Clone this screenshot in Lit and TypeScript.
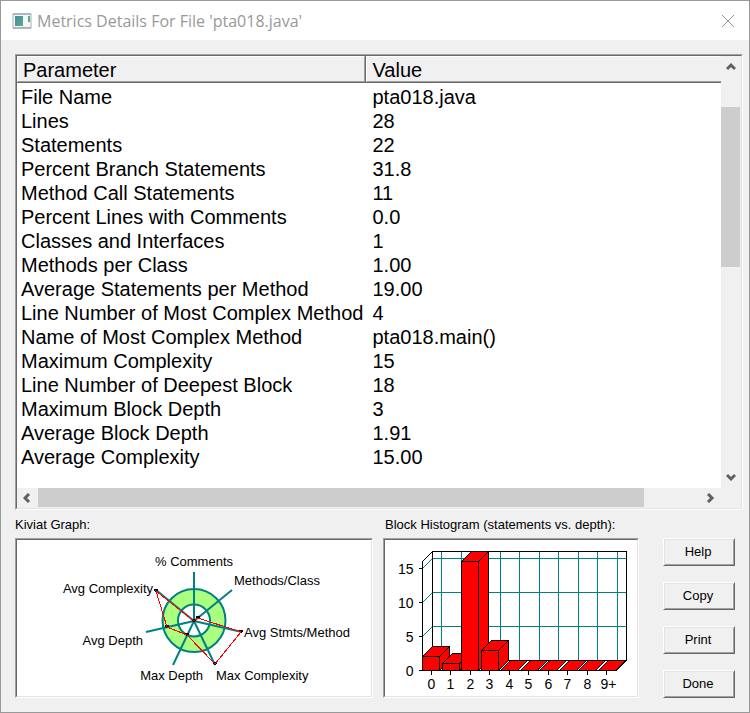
import { LitElement, html, svg, css } from "lit";
import { customElement, property } from "lit/decorators.js";
import { styleMap } from "lit/directives/style-map.js";

const METRICS: [string, string][] = [
  ["File Name", "pta018.java"],
  ["Lines", "28"],
  ["Statements", "22"],
  ["Percent Branch Statements", "31.8"],
  ["Method Call Statements", "11"],
  ["Percent Lines with Comments", "0.0"],
  ["Classes and Interfaces", "1"],
  ["Methods per Class", "1.00"],
  ["Average Statements per Method", "19.00"],
  ["Line Number of Most Complex Method", "4"],
  ["Name of Most Complex Method", "pta018.main()"],
  ["Maximum Complexity", "15"],
  ["Line Number of Deepest Block", "18"],
  ["Maximum Block Depth", "3"],
  ["Average Block Depth", "1.91"],
  ["Average Complexity", "15.00"],
];

interface Axis {
  label: string;
  reach: number;
  x: number;
  y: number;
  anchor: "start" | "middle" | "end";
}

// Axes run clockwise from twelve o'clock; reach is the distance from the hub.
const AXES: Axis[] = [
  { label: "% Comments", reach: 0, x: 177, y: 26, anchor: "middle" },
  { label: "Methods/Class", reach: 5, x: 217, y: 45, anchor: "start" },
  { label: "Avg Stmts/Method", reach: 48, x: 227, y: 97, anchor: "start" },
  { label: "Max Complexity", reach: 48, x: 199, y: 140, anchor: "start" },
  { label: "Max Depth", reach: 16, x: 186, y: 140, anchor: "end" },
  { label: "Avg Depth", reach: 28, x: 126, y: 105, anchor: "end" },
  { label: "Avg Complexity", reach: 48, x: 136, y: 53, anchor: "end" },
];

@customElement("kiviat-graph")
export class KiviatGraph extends LitElement {
  static styles = css`
    :host { display: block; }
    svg { display: block; width: 100%; height: 156px; }
    text { font: 13px "Liberation Sans", Arial, sans-serif; fill: #000; }
    .band { fill: #aaff80; stroke: #008080; stroke-width: 2; }
    .core { fill: #fff; stroke: #008080; stroke-width: 2; }
    .spoke { stroke: #008080; stroke-width: 2; }
    .values { fill: none; stroke: #f00; stroke-width: 1; shape-rendering: crispEdges; }
  `;

  private at(i: number, r: number): [number, number] {
    const a = (i * 2 * Math.PI) / AXES.length;
    return [Math.round(177 + r * Math.sin(a)), Math.round(81 - r * Math.cos(a))];
  }

  render() {
    const points = AXES.map((axis, i) => this.at(i, axis.reach));
    return html`<svg viewBox="0 0 354 156" role="img" aria-label="Kiviat graph">
      <circle class="band" cx="177" cy="80.5" r="31.5"></circle>
      <circle class="core" cx="177" cy="80.5" r="16"></circle>
      ${AXES.map((_, i) => {
        const [x, y] = this.at(i, 49);
        return svg`<line class="spoke" x1="177" y1="81" x2=${x} y2=${y}></line>`;
      })}
      ${points.map(([x, y]) => svg`<path d="M${x - 2} ${y - 2}h4v2h-1v1h-2v-1h-1z"></path>`)}
      <polygon class="values" points=${points.map((p) => p.join(",")).join(" ")}></polygon>
      ${AXES.map((a) => svg`<text x=${a.x} y=${a.y} text-anchor=${a.anchor}>${a.label}</text>`)}
    </svg>`;
  }
}

const DEPTHS: [string, number][] = [
  ["0", 2], ["1", 1], ["2", 16], ["3", 3], ["4", 0],
  ["5", 0], ["6", 0], ["7", 0], ["8", 0], ["9+", 0],
];

@customElement("block-histogram")
export class BlockHistogram extends LitElement {
  static styles = css`
    :host { display: block; }
    svg { display: block; width: 100%; height: 156px; }
    text { font: 14px "Liberation Sans", Arial, sans-serif; fill: #000; }
    .grid { fill: none; stroke: #008080; shape-rendering: crispEdges; }
    .slope { fill: none; stroke: #008080; }
    .frame { fill: none; stroke: #000; shape-rendering: crispEdges; }
    .bar { fill: #f00; stroke: #000; shape-rendering: crispEdges; }
  `;

  render() {
    const left = 37, base = 130, depth = 10, pitch = 19.5, width = 17, unit = 6.8;
    const top = base - Math.round(16 * unit);
    const end = left + Math.round(pitch * 10) - 1;
    return html`<svg viewBox="0 0 252 156" role="img" aria-label="Block histogram">
      <g transform="translate(0.5 0.5)">
        ${DEPTHS.map((_, k) => {
          const x = Math.round(left + 19 + k * pitch);
          return svg`<path class="grid" d="M${x} ${top - depth}V${base - depth}"></path>`;
        })}
        ${[5, 10, 15].map((v) => {
          const y = base - v * unit;
          return svg`<path class="grid" d="M${left + depth} ${y - depth}H${end + depth}"></path>
            <path class="slope" d="M${left} ${y}l${depth} ${-depth}"></path>`;
        })}
        <path class="frame" d="M${left} ${base}V${top}l${depth} ${-depth}H${end + depth}V${base - depth}L${end} ${base}H${left - 4}M${left + depth} ${top - depth}V${base - depth}H${end + depth}"></path>
        ${DEPTHS.map(([, v], k) => {
          const x = Math.round(left + k * pitch);
          const h = Math.round(v * unit);
          const y = base - h;
          return svg`
            <path class="bar" d="M${x} ${y}l${depth} ${-depth}h${width}v${h}l${-depth} ${depth}h${-width}z"></path>
            <path class="frame" d="M${x} ${y}h${width}v${h}M${x + width} ${y}l${depth} ${-depth}"></path>`;
        })}
        ${[0, 5, 10, 15].map((v) => {
          const y = base - v * unit;
          return svg`<path class="frame" d="M${left - 4} ${y}H${left}"></path>
            <text x="28" y=${y + 5} text-anchor="end">${v}</text>`;
        })}
        ${DEPTHS.map(([label], k) => {
          const x = Math.floor(left + 9 + k * pitch);
          return svg`<path class="frame" d="M${x} ${base}v4"></path>
            <text x=${label.length > 1 ? x + 2 : x} y="148" text-anchor="middle">${label}</text>`;
        })}
      </g>
    </svg>`;
  }
}

const CHEVRONS: Record<string, string> = {
  up: "M1 7L5 3L9 7",
  down: "M1 2L5 6L9 2",
  left: "M6 1L2 5L6 9",
  right: "M2 1L6 5L2 9",
};

@customElement("classic-scrollbar")
export class ClassicScrollbar extends LitElement {
  @property({ type: Boolean, reflect: true }) vertical = false;
  @property({ type: Number }) start = 0;
  @property({ type: Number }) size = 50;

  static styles = css`
    :host { display: flex; height: 20px; background: #f0f0f0; }
    :host([vertical]) { flex-direction: column; width: 20px; height: auto; }
    button {
      display: flex; align-items: center; justify-content: center;
      flex: 0 0 21px; padding: 0; border: 0; background: none;
    }
    svg { width: 10px; height: 10px; fill: none; stroke: #606060; stroke-width: 3; }
    .track { flex: 1; display: flex; min-width: 0; min-height: 0; padding-bottom: 1px; }
    :host([vertical]) .track { flex-direction: column; padding: 0 1px 0 0; }
    .thumb { background: #cdcdcd; }
  `;

  private arrow(name: string) {
    return html`<button aria-label="Scroll ${name}">
      <svg viewBox="0 0 10 10"><path d=${CHEVRONS[name]}></path></svg>
    </button>`;
  }

  render() {
    const side = (p: number) => ({ flex: `0 0 ${p}%` });
    return html`${this.arrow(this.vertical ? "up" : "left")}
      <div class="track">
        <div style=${styleMap(side(this.start))}></div>
        <div class="thumb" style=${styleMap(side(this.size))}></div>
      </div>
      ${this.arrow(this.vertical ? "down" : "right")}`;
  }
}

@customElement("app-root")
export class AppRoot extends LitElement {
  static styles = css`
    :host {
      display: flex; flex-direction: column; box-sizing: border-box; min-height: 100vh;
      border: 1px solid #999; background: #f0f0f0; color: #000;
      font: 13px "Liberation Sans", Arial, sans-serif;
    }
    .titlebar {
      display: flex; align-items: center; height: 39px; padding: 0 13px 0 11px;
      background: #fff; color: #999;
    }
    .titlebar h1 {
      flex: 1; margin: 0 0 0 5px; font: 16px "Open Sans", sans-serif;
    }
    .app-icon { width: 20px; height: 16px; }
    .close { display: flex; padding: 0; border: 0; background: none; }
    .close svg { width: 16px; height: 16px; stroke: #999; }
    main { flex: 1; display: flex; flex-direction: column; padding: 14px 6px 14px 14px; }
    .sunken {
      border: 1px solid; border-color: #a0a0a0 #fff #fff #a0a0a0; background: #fff;
    }
    .well { border: 1px solid; border-color: #696969 #e3e3e3 #e3e3e3 #696969; }
    .list { flex: 1; display: flex; }
    .list .well {
      flex: 1; display: grid; min-width: 0; background: #f0f0f0;
      grid-template: minmax(0, 1fr) 20px / minmax(0, 1fr) 20px;
    }
    .view { background: #fff; overflow: hidden; }
    table { width: 100%; table-layout: fixed; border-collapse: separate; border-spacing: 0; font-size: 20px; }
    th, td { padding: 0; text-align: left; font-weight: 400; white-space: nowrap; }
    .name { width: 49.5%; }
    th { background: #f0f0f0; border-bottom: 1px solid #696969; border-right: 1px solid #696969; }
    th:last-child { border-right: 0; }
    .cell {
      height: 24px; line-height: 26px; padding-left: 5px;
      border: 1px solid; border-color: #fff #a0a0a0 #a0a0a0 #fff;
    }
    th:last-child .cell { border-right: 0; }
    td { height: 24px; line-height: 24px; padding-left: 4px; }
    td + td { padding-left: 6px; }
    tbody::before { content: ""; display: block; height: 2px; }
    .lower {
      display: grid; grid-template-columns: minmax(0, 358fr) minmax(0, 256fr) 86px;
      column-gap: 10px; padding-right: 8px;
    }
    h2 {
      height: 28px; margin: 0; font-size: 13px; font-weight: 400; line-height: 30px;
      white-space: nowrap;
    }
    .chart-title { padding-left: 2px; }
    .actions { display: flex; flex-direction: column; gap: 16px; padding: 28px 0 0 14px; }
    .actions button {
      height: 28px; padding: 0 2px 2px 0; color: #000; background: #f0f0f0; font: inherit;
      border: 1px solid; border-color: #fff #696969 #696969 #fff;
      box-shadow: inset 1px 1px #e3e3e3, inset -1px -1px #a0a0a0;
    }
  `;

  render() {
    return html`
      <header class="titlebar">
        <svg class="app-icon" viewBox="0 0 20 16" aria-hidden="true">
          <defs>
            <linearGradient id="pane" x1="0" y1="0" x2="1" y2="1">
              <stop offset="0" stop-color="#4c86a4"></stop>
              <stop offset="1" stop-color="#55b083"></stop>
            </linearGradient>
          </defs>
          <rect x="1" y="1" width="18" height="14" fill="#f4f6f8" stroke="#a9b0b8"></rect>
          <path d="M1 1H19" stroke="#8c98a8"></path>
          <path d="M1 15H19" stroke="#8c929c"></path>
          <rect x="3" y="3" width="8" height="10" fill="url(#pane)"></rect>
          <rect x="16" y="3" width="2" height="6" fill="#55b083"></rect>
        </svg>
        <h1>Metrics Details For File 'pta018.java'</h1>
        <button class="close" aria-label="Close">
          <svg viewBox="0 0 16 16"><path d="M2 2L14 14M14 2L2 14"></path></svg>
        </button>
      </header>
      <main>
        <section class="list sunken">
          <div class="well">
            <div class="view">
              <table>
                <thead>
                  <tr>
                    <th class="name" scope="col"><div class="cell">Parameter</div></th>
                    <th scope="col"><div class="cell">Value</div></th>
                  </tr>
                </thead>
                <tbody>
                  ${METRICS.map(([name, value]) => html`<tr><td>${name}</td><td>${value}</td></tr>`)}
                </tbody>
              </table>
            </div>
            <classic-scrollbar vertical .start=${7.7} .size=${41}></classic-scrollbar>
            <classic-scrollbar .start=${0} .size=${91.5}></classic-scrollbar>
          </div>
        </section>
        <div class="lower">
          <section>
            <h2>Kiviat Graph:</h2>
            <div class="sunken"><div class="well"><kiviat-graph></kiviat-graph></div></div>
          </section>
          <section>
            <h2 class="chart-title">Block Histogram (statements vs. depth):</h2>
            <div class="sunken"><div class="well"><block-histogram></block-histogram></div></div>
          </section>
          <nav class="actions" aria-label="Actions">
            ${["Help", "Copy", "Print", "Done"].map((t) => html`<button>${t}</button>`)}
          </nav>
        </div>
      </main>
    `;
  }
}
